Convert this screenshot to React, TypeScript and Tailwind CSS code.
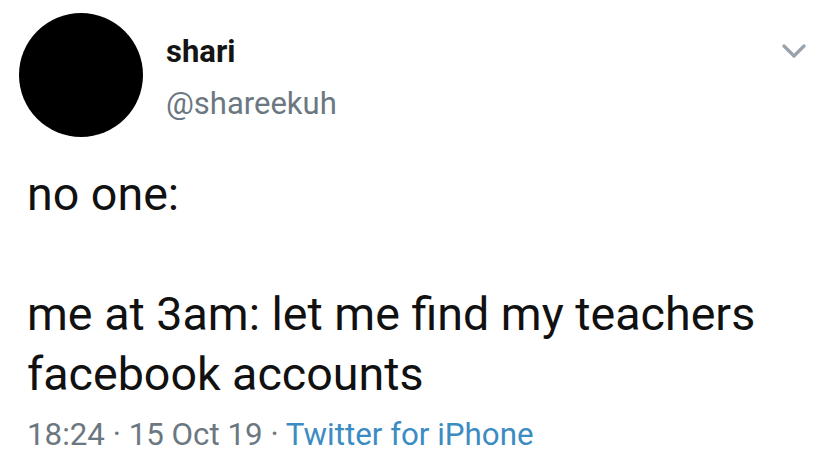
export default function App() {
  return (
    <div className="w-[830px] h-[473px] bg-white overflow-hidden font-['Roboto',sans-serif] text-[#111]">
      {/* Header */}
      <div className="flex pt-[13px] pl-[19px] pr-[24px]">
        <div className="h-[124px] w-[124px] shrink-0 rounded-full bg-black" />
        <div className="ml-[23px] mt-[13px]">
          <div className="text-[31px] leading-[52px] font-bold text-[#141414]">shari</div>
          <div className="text-[31px] leading-[52px] text-[#6b7781]">@shareekuh</div>
        </div>
        <svg
          className="ml-auto mt-[31px]"
          width="24"
          height="14"
          viewBox="0 0 24 14"
          fill="none"
          stroke="#9aa3ab"
          strokeWidth="3.2"
          strokeLinecap="round"
          strokeLinejoin="round"
        >
          <path d="M2 2l10 10L22 2" />
        </svg>
      </div>

      {/* Tweet body */}
      <div className="mt-[27px] pl-[27px] text-[46.6px] leading-[60px] text-[#111]">
        <p>no one:</p>
        <p>&nbsp;</p>
        <p>me at 3am: let me find my teachers</p>
        <p>facebook accounts</p>
      </div>

      {/* Meta */}
      <div className="mt-[11px] pl-[27px] text-[31.3px] leading-[40px] text-[#6b7781]">
        18:24 · 15 Oct 19 · <span className="text-[#3b8cc2]">Twitter for iPhone</span>
      </div>
    </div>
  )
}
